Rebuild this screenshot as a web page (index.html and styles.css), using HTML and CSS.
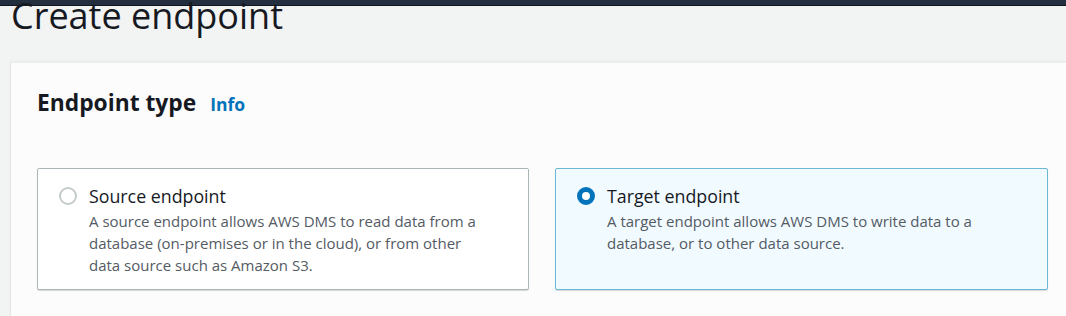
FILE: index.html
```html
<!DOCTYPE html>
<html>
<head>
    <meta charset="UTF-8">
    <meta name="viewport" content="width=device-width, initial-scale=1.0">
    <title>Create endpoint</title>
    <link rel="stylesheet" href="styles.css">
</head>
<body>
    <div class="top-bar"></div>
    <div class="page">
      <h1 class="page-title">Create endpoint</h1>
      <div class="panel">
        <div class="panel-header">
          <h2>Endpoint type</h2>
          <a class="info-link" href="#">Info</a>
        </div>
        <div class="tiles">
          <label class="tile">
            <span class="radio"></span>
            <span class="tile-text">
              <span class="tile-label">Source endpoint</span>
              <span class="tile-desc">A source endpoint allows AWS DMS to read data from a database (on-premises or in the cloud), or from other data source such as Amazon S3.</span>
            </span>
          </label>
          <label class="tile selected">
            <span class="radio"></span>
            <span class="tile-text">
              <span class="tile-label">Target endpoint</span>
              <span class="tile-desc">A target endpoint allows AWS DMS to write data to a database, or to other data source.</span>
            </span>
          </label>
        </div>
      </div>
    </div>
</body>
</html>
```

FILE: styles.css
```css
body {
  margin: 0;
  background: #f2f3f3;
  font-family: "Open Sans", "Noto Sans", sans-serif;
  color: #16191f;
  overflow: hidden;
}

.top-bar {
  height: 5px;
  background: #232f3e;
  border-bottom: 1px solid #0d1520;
}

.page {
  padding-left: 10px;
}

.page-title {
  margin: -13px 0 0 1px;
  font-size: 36px;
  font-weight: 400;
  line-height: 46px;
  height: 69px;
  color: #16191f;
}

.panel {
  background: #fcfcfc;
  border-left: 1px solid #e4e6e6;
  border-top: 1px solid #eaeded;
  box-shadow: 0 -1px 2px rgba(0,0,0,0.04);
  padding: 24px 0 0 26px;
  height: 230px;
}

.panel-header {
  display: flex;
  align-items: baseline;
  gap: 14px;
}

.panel-header h2 {
  margin: 0;
  font-size: 22.8px;
  font-weight: 700;
  line-height: 32px;
}

.info-link {
  color: #0073bb;
  font-weight: 700;
  font-size: 17.5px;
  text-decoration: none;
}

.tiles {
  display: grid;
  grid-template-columns: 492px 493px;
  gap: 26px;
  margin-top: 49px;
}

.tile {
  display: flex;
  gap: 12px;
  height: 122px;
  box-sizing: border-box;
  padding: 15px 44px 0 21px;
  background: #fff;
  border: 1px solid #aab7b8;
  border-radius: 2px;
  box-shadow: 0 1px 1px rgba(0,0,0,0.15);
}

.tile.selected {
  background: #f1faff;
  border-color: #6ab8d8;
}

.radio {
  flex: none;
  width: 18px;
  height: 18px;
  margin-top: 3px;
  box-sizing: border-box;
  border: 2px solid #c5cbcc;
  border-radius: 50%;
  background: #fff;
}

.selected .radio {
  border: 5px solid #0073bb;
}

.tile-text {
  display: flex;
  flex-direction: column;
}

.tile-label {
  font-size: 17.8px;
  line-height: 24px;
  margin-bottom: 2px;
  color: #16191f;
}

.tile-desc {
  font-size: 15px;
  line-height: 22px;
  color: #545b64;
}
```
